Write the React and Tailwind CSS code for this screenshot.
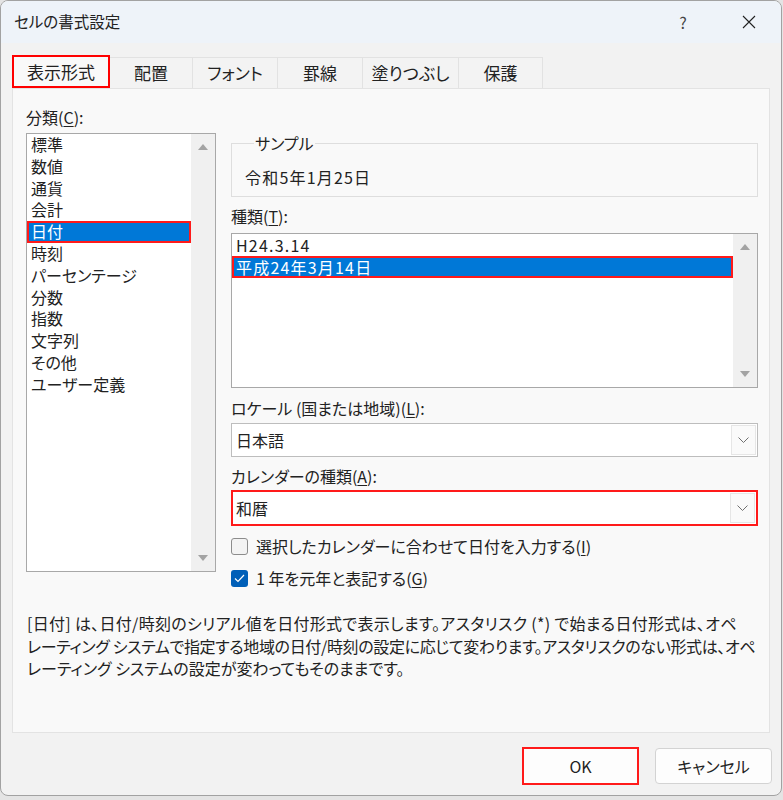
import React from 'react';

const categories = ['標準', '数値', '通貨', '会計', '日付', '時刻', 'パーセンテージ', '分数', '指数', '文字列', 'その他', 'ユーザー定義'];
const formats = ['H24.3.14', '平成24年3月14日'];
const tabs = [
  { label: '配置', w: 'w-[83px]' },
  { label: 'フォント', w: 'w-[85px]' },
  { label: '罫線', w: 'w-[85px]' },
  { label: '塗りつぶし', w: 'w-[96px]' },
  { label: '保護', w: 'w-[84px]' },
];

function ScrollArrows() {
  return (
    <div className="w-[24px] bg-[#f0f0f0] flex flex-col items-center justify-between py-[10px]">
      <svg width="10" height="6" viewBox="0 0 10 6"><path d="M5 0 L10 6 L0 6 Z" fill="#a3a3a3" /></svg>
      <svg width="10" height="6" viewBox="0 0 10 6"><path d="M0 0 L10 0 L5 6 Z" fill="#a3a3a3" /></svg>
    </div>
  );
}

function Chevron() {
  return (
    <div className="w-[25px] my-[1px] mr-[1px] border border-[#e6e6e6] bg-[#fafafa] flex items-center justify-center">
      <svg width="11" height="6" viewBox="0 0 11 6"><path d="M0.5 0.5 L5.5 5.5 L10.5 0.5" fill="none" stroke="#707070" strokeWidth="1" /></svg>
    </div>
  );
}

function Label({ text, hot, rest }) {
  return (
    <div className="h-[20px] leading-[20px] text-[16px] whitespace-nowrap">
      {text}<span className="underline underline-offset-2">{hot}</span>{rest}
    </div>
  );
}

export default function App() {
  return (
    <div className="w-[783px] h-[800px] bg-[#e4e4e4] text-[#222] [font-family:'Noto_Sans_CJK_JP','Noto_Sans',sans-serif] [font-feature-settings:'palt']">
      <div className="w-[782px] h-[796px] rounded-[8px] border border-[#a2a2a2] bg-[#f2f2f2] overflow-hidden flex flex-col">
        {/* title bar */}
        <div className="h-[42px] bg-[#eef3f9] flex items-center pl-[13px] pr-[9px]">
          <span className="text-[15.5px]">セルの書式設定</span>
          <span className="ml-auto w-[46px] text-center text-[16px] text-[#444]">?</span>
          <span className="ml-[20px] w-[46px] flex justify-center">
            <svg width="14" height="14" viewBox="0 0 14 14"><path d="M1 1 L13 13 M13 1 L1 13" stroke="#222" strokeWidth="1.1" /></svg>
          </span>
        </div>

        <div className="px-[11px] pt-[12px]">
          {/* tabs */}
          <div className="flex items-end h-[33px]">
            <div className="w-[98px] h-[33px] border-2 border-[#ff0000] bg-[#f9f9f9] flex items-center justify-center text-[17px]">表示形式</div>
            {tabs.map(t => (
              <div key={t.label} className={`${t.w} h-[31px] border-t border-r border-[#e2e2e2] bg-[#f3f3f3] flex items-center justify-center text-[17px]`}>
                {t.label}
              </div>
            ))}
          </div>

          {/* panel */}
          <div className="h-[645px] border border-[#e3e3e3] bg-[#f9f9f9] pl-[13px] pr-[11px] pt-[18px]">
            <div className="flex gap-[15px] items-start">
              <div className="w-[190px]">
                <Label text="分類(" hot="C" rest="):" />
                <div className="mt-[6px] h-[439px] border border-[#a8a8a8] bg-white flex">
                  <div className="flex-1 text-[16px]">
                    {categories.map(c => (
                      <div key={c} className={`h-[21.8px] leading-[21.8px] pl-[4px] whitespace-nowrap ${c === '日付' ? 'bg-[#0078d7] text-white ring-2 ring-inset ring-[#ff1a1a]' : ''}`}>
                        {c}
                      </div>
                    ))}
                  </div>
                  <ScrollArrows />
                </div>
              </div>

              <div className="w-[527px] mt-[26px]">
                <fieldset className="border border-[#dedede] px-[13px] pb-[9px]">
                  <legend className="ml-[9px] px-[1px] leading-[20px] text-[16px]">サンプル</legend>
                  <div className="mt-[14px] leading-[20px] text-[16px] tracking-[1.2px]">令和5年1月25日</div>
                </fieldset>

                <div className="mt-[9px]"><Label text="種類(" hot="T" rest="):" /></div>
                <div className="mt-[7px] h-[155px] border border-[#a8a8a8] bg-white flex">
                  <div className="flex-1 text-[16px] tracking-[1.2px]">
                    {formats.map((f, i) => (
                      <div key={f} className={`h-[22px] leading-[22px] pl-[4px] ${i === 1 ? 'bg-[#0078d7] text-white ring-2 ring-inset ring-[#ff1a1a]' : ''}`}>
                        {f}
                      </div>
                    ))}
                  </div>
                  <ScrollArrows />
                </div>

                <div className="mt-[10px]"><Label text="ロケール (国または地域)(" hot="L" rest="):" /></div>
                <div className="mt-[5px] h-[34px] border border-[#bdbdbd] bg-white flex">
                  <div className="flex-1 pl-[4px] flex items-center text-[16px]">日本語</div>
                  <Chevron />
                </div>

                <div className="mt-[9px]"><Label text="カレンダーの種類(" hot="A" rest="):" /></div>
                <div className="mt-[4px] h-[36px] border-2 border-[#ff1a1a] bg-white flex">
                  <div className="flex-1 pl-[3px] flex items-center text-[16px]">和暦</div>
                  <Chevron />
                </div>

                <div className="mt-[10px] h-[20px] flex items-center gap-[8px]">
                  <div className="w-[17px] h-[17px] rounded-[3px] border border-[#8c8c8c] bg-[#f3f3f3]" />
                  <Label text="選択したカレンダーに合わせて日付を入力する(" hot="I" rest=")" />
                </div>
                <div className="mt-[12px] h-[20px] flex items-center gap-[8px]">
                  <div className="w-[17px] h-[17px] rounded-[3px] bg-[#005fb8] flex items-center justify-center">
                    <svg width="11" height="9" viewBox="0 0 11 9"><path d="M1 4.5 L4 7.5 L10 1" fill="none" stroke="#fff" strokeWidth="1.2" /></svg>
                  </div>
                  <Label text="1 年を元年と表記する(" hot="G" rest=")" />
                </div>
              </div>
            </div>

            <div className="mt-[24px] pl-[1px] text-[16px] leading-[22.5px] whitespace-nowrap">
              <div className="tracking-[0.3px]">[日付] は、日付/時刻のシリアル値を日付形式で表示します。アスタリスク (*) で始まる日付形式は、オペ</div>
              <div className="tracking-[-0.35px]">レーティング システムで指定する地域の日付/時刻の設定に応じて変わります。アスタリスクのない形式は、オペ</div>
              <div>レーティング システムの設定が変わってもそのままです。</div>
            </div>
          </div>
        </div>

        {/* buttons */}
        <div className="flex justify-end items-center gap-[16px] pr-[9px] pt-[14px]">
          <button className="w-[117px] h-[38px] border-2 border-[#ff1a1a] bg-[#fdfdfd] text-[16px]">OK</button>
          <button className="w-[117px] h-[36px] border border-[#d3d3d3] rounded-[4px] bg-[#fdfdfd] text-[16px]">キャンセル</button>
        </div>
      </div>
    </div>
  );
}
